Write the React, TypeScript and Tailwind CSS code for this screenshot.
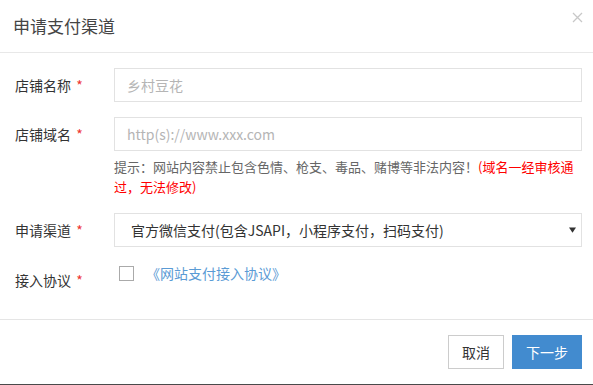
export default function App() {
  const font = { fontFamily: '"Noto Sans CJK SC", "Noto Sans", sans-serif' };

  return (
    <div
      className="relative w-[593px] h-[385px] bg-white border-b border-[#4a4a4a] text-[#333] flex flex-col"
      style={font}
    >
      {/* header */}
      <div className="h-[53px] border-b border-[#e8e8e8] flex items-center pl-[13px] pb-[1px]">
        <h1 className="text-[17px] leading-none text-[#444] font-normal">申请支付渠道</h1>
      </div>
      <button className="absolute left-[572px] top-[12px] w-[11px] h-[11px]">
        <svg viewBox="0 0 11 11" className="w-[11px] h-[11px]">
          <path d="M1 1 L10 10 M10 1 L1 10" stroke="#c8c8c8" strokeWidth="1.3" fill="none" />
        </svg>
      </button>

      {/* body */}
      <div className="flex-1 pt-[15px]">
        {/* shop name */}
        <div className="flex">
          <label className="w-[114px] shrink-0 pl-[15px] h-[34px] leading-[34px] text-[14px] text-[#333]">
            店铺名称 <span className="text-[#e33] ml-[2px]">*</span>
          </label>
          <div className="w-[468px]">
            <input
              className="w-full h-[34px] border border-[#e2e2e2] px-[12px] text-[14px] outline-none placeholder:text-[#b5b5b5]"
              placeholder="乡村豆花"
            />
          </div>
        </div>

        {/* domain */}
        <div className="flex mt-[15px]">
          <label className="w-[114px] shrink-0 pl-[15px] h-[34px] leading-[34px] text-[14px] text-[#333]">
            店铺域名 <span className="text-[#e33] ml-[2px]">*</span>
          </label>
          <div className="w-[468px]">
            <input
              className="w-full h-[34px] border border-[#e2e2e2] px-[12px] text-[14px] outline-none placeholder:text-[#b5b5b5]"
              placeholder="http(s)://www.xxx.com"
            />
            <p className="text-[13px] leading-[20px] text-[#666] mt-[6px]">
              提示：网站内容禁止包含色情、枪支、毒品、赌博等非法内容！
              <span className="text-[#f00]">(域名一经审核通过，无法修改)</span>
            </p>
          </div>
        </div>

        {/* channel */}
        <div className="flex mt-[16px]">
          <label className="w-[114px] shrink-0 pl-[15px] h-[34px] leading-[34px] text-[14px] text-[#333]">
            申请渠道 <span className="text-[#e33] ml-[2px]">*</span>
          </label>
          <div className="w-[468px] relative">
            <div className="h-[34px] border border-[#e2e2e2] pl-[16px] flex items-center text-[14px] text-[#333]">
              官方微信支付(包含JSAPI，小程序支付，扫码支付)
            </div>
            <svg viewBox="0 0 8 6" className="absolute right-[6px] top-[14px] w-[7px] h-[6px]">
              <path d="M0 0 L8 0 L4 6 Z" fill="#333" />
            </svg>
          </div>
        </div>

        {/* agreement */}
        <div className="flex mt-[16px]">
          <label className="w-[114px] shrink-0 pl-[15px] h-[34px] leading-[34px] text-[14px] text-[#333]">
            接入协议 <span className="text-[#e33] ml-[2px]">*</span>
          </label>
          <div className="flex items-start pl-[5px]">
            <span className="w-[15px] h-[15px] border border-[#aaa] mt-[3px] bg-white" />
            <a className="ml-[12px] text-[14px] leading-[20px] text-[#5b9bd5]">《网站支付接入协议》</a>
          </div>
        </div>
      </div>

      {/* footer */}
      <div className="border-t border-[#e5e5e5] pt-[15px] pb-[15px] pr-[11px] flex justify-end gap-[8px]">
        <button className="w-[56px] h-[34px] border border-[#ccc] bg-white text-[14px] text-[#333]">取消</button>
        <button className="w-[70px] h-[34px] bg-[#428bcf] text-[14px] text-white">下一步</button>
      </div>
    </div>
  );
}
